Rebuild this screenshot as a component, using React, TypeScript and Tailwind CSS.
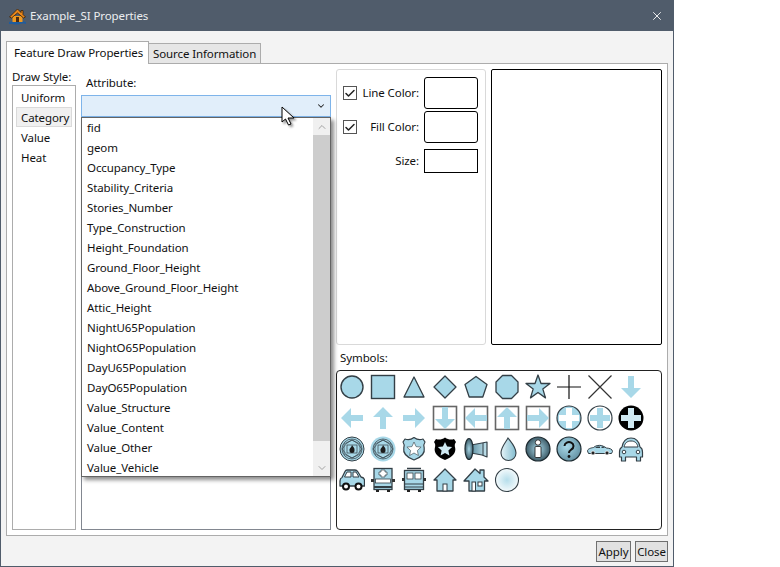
import { ChevronDown, ChevronUp, Check, X } from "lucide-react";

const attributes = [
  "fid",
  "geom",
  "Occupancy_Type",
  "Stability_Criteria",
  "Stories_Number",
  "Type_Construction",
  "Height_Foundation",
  "Ground_Floor_Height",
  "Above_Ground_Floor_Height",
  "Attic_Height",
  "NightU65Population",
  "NightO65Population",
  "DayU65Population",
  "DayO65Population",
  "Value_Structure",
  "Value_Content",
  "Value_Other",
  "Value_Vehicle",
];

const BLUE = "#a8d8e8";
const DARK = "#333f46";

const Outline = ({ d }: { d: string }) => (
  <path d={d} fill={BLUE} stroke={DARK} strokeWidth="1.3" strokeLinejoin="round" />
);

const ARROW_DOWN = "M10 2h6v12h7l-10 10L3 14h7z";
const ARROW_UP = "M10 24h6V12h7L13 2 3 12h7z";
const ARROW_LEFT = "M24 10v6H12v7L2 13l10-10v7z";
const ARROW_RIGHT = "M2 10v6h12v7l10-10L14 3v7z";

const Arrow = ({ d }: { d: string }) => <path d={d} fill={BLUE} />;

const Boxed = ({ d }: { d: string }) => (
  <>
    <rect x="1.5" y="1.5" width="23" height="23" fill="#fff" stroke="#666" strokeWidth="1.6" />
    <path d={d} fill={BLUE} />
  </>
);

const CROSS = "M10 3h6v7h7v6h-7v7h-6v-7H3v-6h7z";

const FireBadge = ({ halo }: { halo?: boolean }) => (
  <>
    <circle cx="13" cy="13" r={halo ? 12.5 : 12} fill={BLUE} stroke={halo ? "none" : DARK} />
    <circle cx="13" cy="13" r="10" fill="none" stroke={DARK} strokeWidth="0.7" />
    <path d="M5 8l8-4 8 4v10l-8 4-8-4z" fill="none" stroke={DARK} strokeWidth="0.7" />
    <path d="M3 13l5-6 5-3 5 3 5 6-5 6-5 3-5-3z" fill="none" stroke={DARK} strokeWidth="0.7" />
    <path d="M8 9h10v8H8z" fill="none" stroke={DARK} strokeWidth="0.7" />
    <path d="M13 9c1 2 3 3 2.500 5.500a2.500 2.500 0 0 1-5 0C10 12.500 12.500 11.500 13 9z" fill="#1c1c1c" />
  </>
);

const STAR = "M13 6l2.100 4.600 5 .5-3.700 3.400 1 5L13 17l-4.400 2.500 1-5-3.700-3.400 5-.5z";
const SHIELD = "M4 3c2.500 1 6 .8 9-1.500C16 3.800 19.500 4 22 3l2 3c-1.500 2-1.500 3.500-.8 6 .9 4.500-2.200 9-10.200 12C5 21 1.900 16.500 2.800 12c.7-2.500.7-4-.8-6z";

const symbols = [
  <circle key="circle" cx="13" cy="13" r="11" fill={BLUE} stroke={DARK} strokeWidth="1.4" />,
  <rect key="square" x="1.500" y="1.500" width="23" height="23" fill={BLUE} stroke={DARK} strokeWidth="1.4" />,
  <Outline key="triangle" d="M13 3l10 20H3z" />,
  <Outline key="diamond" d="M13 2l11 11-11 11L2 13z" />,
  <Outline key="pentagon" d="M13 2.500l11 8-4.200 12.500H6.200L2 10.500z" />,
  <Outline key="octagon" d="M8.500 1.500h9l6.500 6.500v10l-6.500 6.500h-9L2 18V8z" />,
  <Outline key="star" d="M13 1l3 8.500h9l-7.200 5.400 2.700 9L13 18.500 5.500 23.900l2.700-9L1 9.500h9z" />,
  <path key="plus" d="M13 1v24M1 13h24" stroke="#111" strokeWidth="1.200" />,
  <path key="cross" d="M1.500 1.500l23 23M24.500 1.500l-23 23" stroke="#333" strokeWidth="1.200" />,
  <Arrow key="down" d={ARROW_DOWN} />,
  <Arrow key="left" d={ARROW_LEFT} />,
  <Arrow key="up" d={ARROW_UP} />,
  <Arrow key="right" d={ARROW_RIGHT} />,
  <Boxed key="bdown" d={ARROW_DOWN} />,
  <Boxed key="bleft" d={ARROW_LEFT} />,
  <Boxed key="bup" d={ARROW_UP} />,
  <Boxed key="bright" d={ARROW_RIGHT} />,
  <g key="plus1">
    <circle cx="13" cy="13" r="12" fill={BLUE} stroke={DARK} strokeWidth="1.2" />
    <path d={CROSS} fill="#fff" />
  </g>,
  <g key="plus2">
    <circle cx="13" cy="13" r="12" fill="#fff" stroke={DARK} strokeWidth="1.2" />
    <path d={CROSS} fill={BLUE} />
  </g>,
  <g key="plus3">
    <circle cx="13" cy="13" r="12.500" fill="#000" />
    <path d={CROSS} fill="#cfe9f2" />
  </g>,
  <FireBadge key="fire1" />,
  <FireBadge key="fire2" halo />,
  <g key="shield1">
    <path d={SHIELD} fill={BLUE} stroke={DARK} strokeWidth="1.2" strokeLinejoin="round" />
    <path d={STAR} fill="#fff" stroke={DARK} strokeWidth="0.6" />
  </g>,
  <g key="shield2">
    <path d={SHIELD} fill="#000" />
    <path d={STAR} fill="#cfe9f2" />
  </g>,
  <g key="horn">
    <path d="M8 9l11-2 5-1v15l-5-2-11-2z" fill="url(#horn)" stroke={DARK} strokeWidth="1.200" strokeLinejoin="round" />
    <ellipse cx="6" cy="13" rx="4" ry="10.500" fill="url(#dark)" stroke="#1d2a30" strokeWidth="1.200" />
    <path d="M20 7v12" stroke={DARK} />
  </g>,
  <path key="drop" d="M14 2c-2 4-7 9-7 15a7.500 7.500 0 0 0 15 0c0-6-5-11-8-15z" fill="url(#drop)" stroke={DARK} strokeWidth="1.100" />,
  <g key="info">
    <circle cx="13" cy="13" r="12" fill="url(#dark)" stroke="#1d2a30" strokeWidth="1.200" />
    <circle cx="13" cy="6.500" r="2.700" fill="#fff" stroke="#111" strokeWidth="0.800" />
    <rect x="10" y="10.500" width="6" height="11" rx="1" fill="#fff" stroke="#111" strokeWidth="0.800" />
  </g>,
  <g key="question">
    <circle cx="13" cy="13" r="12" fill="url(#quest)" stroke="#1d2a30" strokeWidth="1.200" />
    <path d="M8.500 10a4.500 4 0 1 1 6.800 3.500c-1.500 1-2.300 1.800-2.300 3.500" fill="none" stroke="#111" strokeWidth="2" />
    <circle cx="13" cy="20.500" r="1.400" fill="#111" />
  </g>,
  <g key="carside">
    <path d="M.500 15c0-2 3-3 6-3.500 2-1.800 5-2.500 8-2 2 .5 3 1.500 5 2.500 3 .3 6 1 6 3.500l-1 2H1.500z" fill={BLUE} stroke={DARK} strokeWidth="1" strokeLinejoin="round" />
    <path d="M8 12l2-1.500h3V12zM14.500 10.500c1.500 0 2.500.7 3.500 1.500h-3.500z" fill="#334047" />
    <circle cx="6" cy="17" r="2" fill="#222" stroke="#fff" strokeWidth="0.700" />
    <circle cx="20" cy="17" r="2" fill="#222" stroke="#fff" strokeWidth="0.700" />
  </g>,
  <g key="carfront">
    <path d="M4 11c1-6 4-9 9-9s8 3 9 9c2 1 2.500 3 2.500 5v5h-2v4h-4v-4h-11v4h-4v-4h-2v-5c0-2 .5-4 2.500-5z" fill={BLUE} stroke={DARK} strokeWidth="1.200" strokeLinejoin="round" />
    <path d="M6 11c1-4 3-6 7-6s6 2 7 6z" fill="#fff" stroke={DARK} />
    <circle cx="6" cy="16" r="1.800" fill="#fff" stroke={DARK} />
    <circle cx="20" cy="16" r="1.800" fill="#fff" stroke={DARK} />
  </g>,
  <g key="car">
    <path d="M1 14c0-2 .5-3 2-3.500L6 4.500c.5-1 1-1.500 2-1.500h8c1 0 2 .5 3 2l3 5c2.500 .5 3.500 1.500 3.500 3.500V19H1z" fill={BLUE} stroke={DARK} strokeWidth="1.300" strokeLinejoin="round" />
    <path d="M8 5h4v5H5.500zM14 5h3l3 5h-6z" fill="#fff" stroke={DARK} />
    <circle cx="7" cy="19.500" r="3" fill="#fff" stroke="#111" strokeWidth="2" />
    <circle cx="19.500" cy="19.500" r="3" fill="#fff" stroke="#111" strokeWidth="2" />
  </g>,
  <g key="ambulance">
    <rect x="4" y="1.500" width="18" height="21" fill={BLUE} stroke={DARK} strokeWidth="1.300" />
    <path d="M11 3h4v2h2v3h-2v2h-4V8H9V5h2z" fill="#fff" stroke={DARK} strokeWidth="0.700" />
    <rect x="5.500" y="12" width="15" height="4" fill="#fff" stroke={DARK} strokeWidth="0.800" />
    <path d="M1 12h3v3H1zM22 12h3v3h-3z" fill="#333" />
    <path d="M4 20h18" stroke={DARK} strokeWidth="2" />
    <path d="M6 23h3v2H6zM17 23h3v2h-3z" fill="#222" />
  </g>,
  <g key="firetruck">
    <rect x="3.500" y="3.500" width="19" height="19" fill={BLUE} stroke={DARK} strokeWidth="1.300" />
    <path d="M6 1.500h14" stroke={DARK} strokeWidth="1.500" />
    <rect x="6" y="6" width="6" height="6" fill="#fff" stroke={DARK} strokeWidth="0.800" />
    <rect x="14" y="6" width="6" height="6" fill="#fff" stroke={DARK} strokeWidth="0.800" />
    <path d="M1 11h2.500v3H1zM22.500 11H25v3h-2.500z" fill="#333" />
    <path d="M3.500 17h19M3.500 20h19" stroke={DARK} />
    <path d="M6 23h3v2H6zM17 23h3v2h-3z" fill="#222" />
  </g>,
  <g key="house">
    <path d="M13 2L2 13h3v11h16V13h3z" fill={BLUE} stroke={DARK} strokeWidth="1.300" strokeLinejoin="round" />
    <rect x="11" y="17" width="4" height="7" fill="#fff" stroke={DARK} />
  </g>,
  <g key="house2">
    <path d="M12 2l5 4.500V3h4v7l4 4h-3.500v10H6V14H1z" fill={BLUE} stroke={DARK} strokeWidth="1.300" strokeLinejoin="round" />
    <rect x="9" y="15" width="3.500" height="9" fill="#fff" stroke={DARK} />
    <rect x="15" y="15" width="4" height="4" fill="#fff" stroke={DARK} />
  </g>,
  <circle key="glow" cx="13" cy="13" r="11.500" fill="url(#glow)" stroke={DARK} strokeWidth="1.100" />,
];

const Defs = () => (
  <svg width="0" height="0" className="absolute">
    <defs>
      <linearGradient id="horn" x1="0" x2="1">
        <stop offset="0" stopColor="#5d8ea0" />
        <stop offset="1" stopColor="#c5e6f0" />
      </linearGradient>
      <linearGradient id="drop" x1="0" x2="1">
        <stop offset="0" stopColor="#e6f4f8" />
        <stop offset="1" stopColor="#82bccf" />
      </linearGradient>
      <radialGradient id="dark" cx="0.5" cy="0.5" r="0.55">
        <stop offset="0" stopColor="#a8d8e8" />
        <stop offset="1" stopColor="#33505c" />
      </radialGradient>
      <radialGradient id="quest" cx="0.4" cy="0.4" r="0.7">
        <stop offset="0" stopColor="#a8d8e8" />
        <stop offset="1" stopColor="#5e8c9e" />
      </radialGradient>
      <radialGradient id="glow" cx="0.5" cy="0.5" r="0.5">
        <stop offset="0" stopColor="#b6deeb" />
        <stop offset="1" stopColor="#f4fafc" />
      </radialGradient>
    </defs>
  </svg>
);

const ColorRow = ({ label }: { label: string }) => (
  <div className="flex h-8 items-center pl-1.5 pr-[7px]">
    <span className="flex h-[14px] w-[14px] shrink-0 items-center justify-center border border-[#555] bg-white">
      <Check size={13} strokeWidth={3} className="text-[#222]" />
    </span>
    <span className="flex-1 pr-[5px] text-right">{label}</span>
    <div className="h-8 w-[54px] shrink-0 rounded-[3px] border border-black bg-white" />
  </div>
);

const App = () => {
  return (
    <div className="h-[567px] w-[780px] overflow-hidden bg-white font-['Noto_Sans',sans-serif] text-[11.5px] tracking-[-0.1px] text-[#111]">
      <Defs />
      <div className="flex h-[567px] w-[674px] flex-col border border-[#505c6b] bg-[#f3f3f3]">
        <div className="flex h-[30px] shrink-0 items-center bg-[#505c6b] pl-2 pr-[9px] text-[#eceef0]">
          <svg width="17" height="17" viewBox="0 0 17 17">
            <path d="M0 14c3-1.500 5 .5 8.500 0 3-.5 5-1.500 8.500 0v2c-3-1-5 0-8.500.5-3 .5-5-1-8.500-.5z" fill="#1f5c9e" />
            <path d="M3.500 8h10v6h-10z" fill="#f09a20" />
            <path d="M8.500 1L.5 9l2 1 6-5 6 5 2-1-2.500-2.500V2.500h-2v2z" fill="#e8861a" stroke="#33200c" strokeWidth="0.8" strokeLinejoin="round" />
            <path d="M7 9h3v5H7z" fill="#4a2a10" />
          </svg>
          <span className="ml-[4px] flex-1">Example_SI Properties</span>
          <X size={14} strokeWidth={1.5} className="text-white" />
        </div>

        <div className="flex flex-1 flex-col px-[5px] pt-[10px]">
          <div className="relative z-10 flex h-[23px] items-end">
            <div className="flex h-[23px] w-[143px] items-center whitespace-nowrap border border-b-0 border-[#acacac] bg-white pl-[7px]">
              Feature Draw Properties
            </div>
            <div className="mb-px flex h-5 w-[112px] items-center whitespace-nowrap border border-b-0 border-l-0 border-[#acacac] bg-[#e6e6e6] pl-1">
              Source Information
            </div>
          </div>

          <div className="-mt-px flex h-[473px] gap-[5px] border border-[#acacac] bg-white pl-[5px]">
            <div className="flex w-16 flex-col pt-[5px]">
              <div className="h-4 whitespace-nowrap leading-4">Draw Style:</div>
              <div className="h-[445px] border border-[#acacac] bg-white px-[3px] pt-px">
                {["Uniform", "Category", "Value", "Heat"].map((s) => (
                  <div
                    key={s}
                    className={
                      s === "Category"
                        ? "flex h-5 items-center border border-[#dadada] bg-[#f0f0f0] pl-1 pt-0.5"
                        : "flex h-5 items-center pl-[5px] pt-0.5"
                    }
                  >
                    {s}
                  </div>
                ))}
              </div>
            </div>

            <div className="relative flex w-[250px] flex-col pt-[11px]">
              <div className="h-4 pl-[5px] leading-4">Attribute:</div>
              <div className="mt-1 flex h-[22px] items-center justify-end border border-[#7eb4ea] bg-[#e1eefa] pr-[4px]">
                <ChevronDown size={10} strokeWidth={2.5} className="text-[#222]" />
              </div>
              <div className="h-[413px] border border-[#828790] bg-white" />

              <div className="absolute left-0 top-[53px] flex h-[360px] w-[250px] border border-[#646464] bg-white shadow-[3px_3px_4px_rgba(0,0,0,0.45)]">
                <div className="flex-1">
                  {attributes.map((a) => (
                    <div key={a} className="flex h-5 items-center pl-[5px]">
                      {a}
                    </div>
                  ))}
                </div>
                <div className="flex w-[17px] flex-col bg-[#f0f0f0]">
                  <div className="flex h-[17px] items-center justify-center">
                    <ChevronUp size={12} className="text-[#a3a3a3]" />
                  </div>
                  <div className="h-[306px] bg-[#cdcdcd]" />
                  <div className="flex flex-1 items-end justify-center pb-[2px]">
                    <ChevronDown size={12} className="text-[#a3a3a3]" />
                  </div>
                </div>
              </div>
            </div>

            <div className="flex w-[326px] flex-col pt-[5px]">
              <div className="flex h-[276px] gap-[5px]">
                <div className="flex w-[150px] flex-col rounded-[3px] border border-[#d9d9d9] bg-white pt-[7px]">
                  <ColorRow label="Line Color:" />
                  <div className="mt-0.5">
                    <ColorRow label="Fill Color:" />
                  </div>
                  <div className="mt-1.5 flex h-6 items-center pr-[7px]">
                    <span className="flex-1 pr-[5px] text-right">Size:</span>
                    <div className="h-6 w-[54px] border border-black bg-white" />
                  </div>
                </div>
                <div className="w-[171px] rounded-[2px] border border-black bg-white" />
              </div>
              <div className="h-[25px] pl-1 pt-[5px] leading-4">Symbols:</div>
              <div className="grid h-[160px] grid-cols-[repeat(10,31px)] auto-rows-[31px] content-start rounded-[4px] border border-[#222] bg-white pl-[2px]">
                {symbols.map((icon, i) => (
                  <div key={i} className="flex items-center justify-start">
                    <svg width="26" height="26" viewBox="0 0 26 26">
                      {icon}
                    </svg>
                  </div>
                ))}
              </div>
            </div>
          </div>

          <div className="flex justify-end gap-[4px] pt-[5px]">
            <div className="flex h-[21px] w-[35px] items-center justify-center border border-[#707070] bg-[#e1e1e1]">
              Apply
            </div>
            <div className="flex h-[21px] w-[33px] items-center justify-center border border-[#707070] bg-[#e1e1e1]">
              Close
            </div>
          </div>
        </div>
      </div>

      <svg width="16" height="22" viewBox="0 0 16 22" className="absolute left-[281px] top-[106px] drop-shadow-[2px_2px_1px_rgba(0,0,0,0.4)]">
        <path d="M1 1v15l3.500-3 3 6 2.500-1-3-6H13z" fill="#fff" stroke="#000" strokeWidth="1" />
      </svg>
    </div>
  );
};

export default App;
